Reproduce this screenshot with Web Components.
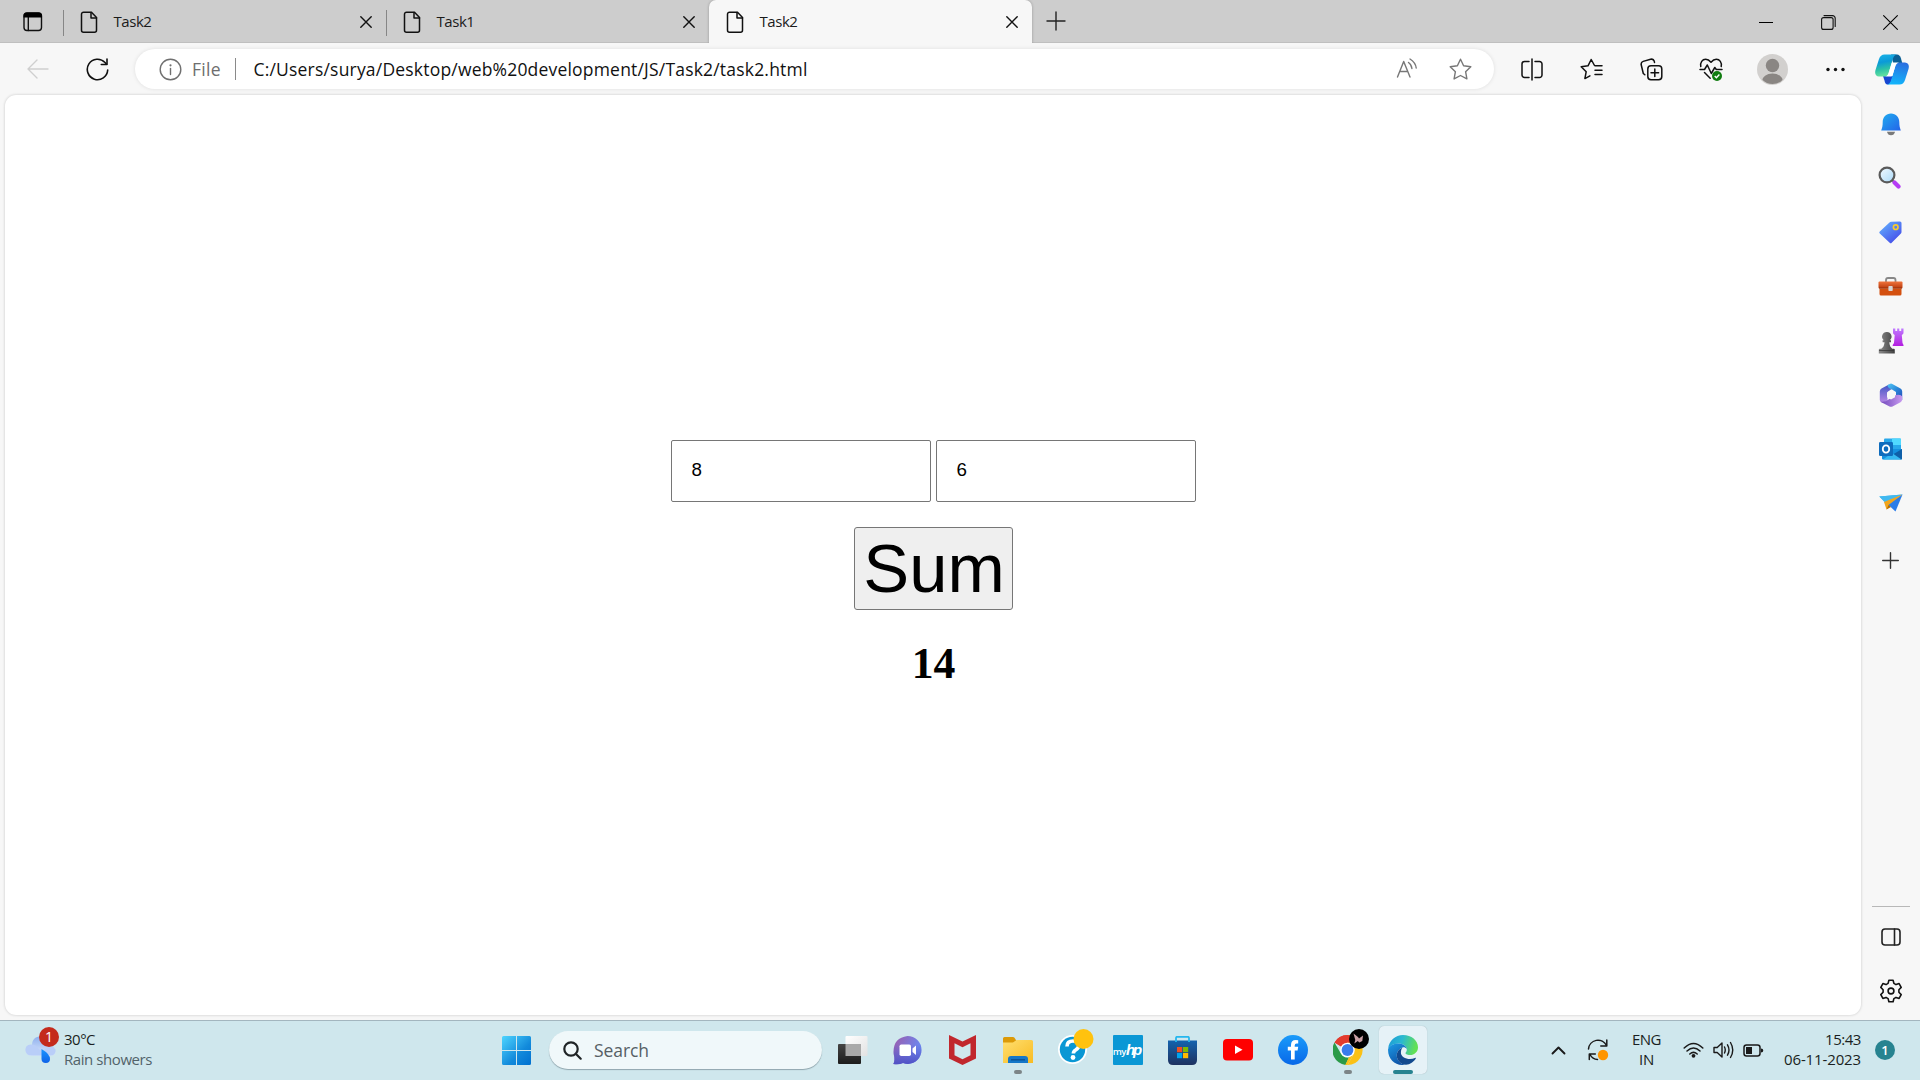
<!DOCTYPE html>
<html lang="en">
<head>
<meta charset="utf-8">
<title>Task2</title>
<style>
html,body{margin:0;padding:0;width:1920px;height:1080px;overflow:hidden;background:#f7f7f7}
body{font-family:"Open Sans","Noto Sans",sans-serif;color:#1b1b1b}
</style>
</head>
<body>
<desktop-screen></desktop-screen>
<script>
const DOC = '<path d="M3.5 1.2h8l5 5.2v12.800a2 2 0 0 1-2 2H3.500a2 2 0 0 1-2-2V3.200a2 2 0 0 1 2-2z"/><path d="M11 1.500v5.500h5.500"/>';
const line = (c, w, body) => `<g fill="none" stroke="${c}" stroke-width="${w}" stroke-linecap="round" stroke-linejoin="round">${body}</g>`;
/* name: [width, height, markup] in CSS pixels */
const ICONS = {
  tabs: [20, 20, line('#111', 1.4, '<rect x="1" y="1" width="17.500" height="17.500" rx="3"/><path d="M5.300 5v13.500"/>') + '<path d="M.5 5.500V4a3.500 3.500 0 0 1 3.500-3.500h11.500A3.500 3.500 0 0 1 19 4v1.500z" fill="#000"/>'],
  doc: [18, 23, line('#111', 1.5, DOC)],
  x: [12, 12, line('#111', 1.4, '<path d="M.8.8l10.400 10.400M11.200.8L.8 11.200"/>')],
  plus: [20, 20, line('#222', 1.4, '<path d="M10 1v18M1 10h18"/>')],
  plusS: [17, 17, line('#333', 1.4, '<path d="M8.500.7v15.600M.7 8.500h15.600"/>')],
  min: [15, 15, '<path d="M0 7h14v1H0z" fill="#000"/>'],
  max: [15, 15, line('#111', 1.1, '<rect x=".6" y="2.600" width="11.500" height="11.800" rx="2"/><path d="M3 .6h8.500a2.700 2.700 0 0 1 2.700 2.700v8.200"/>')],
  xwin: [15, 15, line('#000', 1.1, '<path d="M.6.6l13.800 13.800M14.400.6L.6 14.400"/>')],
  back: [22, 20, line('#cfcfcf', 1.4, '<path d="M21 10H1M10 1L1 10l9 9"/>')],
  reload: [23, 23, line('#111', 1.6, '<path d="M21.700 12A10.200 10.200 0 1 1 19 4.500l1.500 1.700"/><path d="M21 1v5.500h-5.700"/>')],
  info: [23, 23, line('#707070', 1.4, '<circle cx="11.500" cy="11.500" r="10.300"/><path d="M11.500 10.500v6"/>') + '<circle cx="11.500" cy="7.300" r="1.100" fill="#707070"/>'],
  read: [22, 20, line('#777', 1.4, '<path d="M1.500 19L7.700 3.500 14 19M3.700 13.500h8"/><path d="M12.500 4.500q3 2 3.400 6M14 1q5.600 3.500 6.200 9"/>')],
  star: [23, 22, line('#777', 1.4, '<path d="M11.500 1.200l3.100 6.500 7.200 1-5.200 5 1.300 7.200-6.400-3.400-6.400 3.400 1.300-7.200-5.200-5 7.200-1z"/>')],
  split: [22, 23, line('#111', 1.5, '<path d="M8 3.500H3.500A2.500 2.500 0 0 0 1 6v11a2.500 2.500 0 0 0 2.500 2.500H8M14 3.500h4.500A2.500 2.500 0 0 1 21 6v11a2.500 2.500 0 0 1-2.500 2.500H14M11 1v21"/>')],
  favs: [23, 22, line('#111', 1.5, '<path d="M14.500 7.500L11.200 1.500 8 7.800l-6.800 1 5 4.900-1.300 6.900 5-2.800M15 7.800h7M15 12.200h7M15 16.600h7"/>')],
  coll: [23, 23, line('#111', 1.5, '<rect x="7.800" y="7.800" width="14" height="14" rx="3.200"/><path d="M14.800 11v7.600M11 14.800h7.600M4.800 16.800L3.300 15.500 1.200 6.800a3 3 0 0 1 2-3.400l7.400-2.100a3 3 0 0 1 3.700 2L14.500 4.500"/>')],
  heart: [24, 23, line('#111', 1.5, '<path d="M1.800 8.500C1 4.500 3.300 1.300 6.700 1.300c2.400 0 3.800 1.200 5.300 3 1.500-1.800 2.900-3 5.300-3 3.400 0 5.700 3.200 4.900 7.200M1 11.500h4.500L8.300 7l4 8.500 3.500-6 1.500 2H23M5.500 14.500l5.700 5.700"/>') + '<circle cx="18" cy="18" r="5" fill="#107c10"/><path d="M15.700 18l1.700 1.700 3-3.200" stroke="#fff" stroke-width="1.400" fill="none"/>'],
  avatar: [31, 31, '<defs><clipPath id="a"><circle cx="15.500" cy="15.500" r="14.500"/></clipPath></defs><circle cx="15.500" cy="15.500" r="15.500" fill="#d2d0ce"/><circle cx="15.500" cy="11.500" r="6.700" fill="#8a8683"/><ellipse cx="15.500" cy="27" rx="10.500" ry="7.500" fill="#8a8683" clip-path="url(#a)"/>'],
  dots: [19, 5, '<g fill="#111"><circle cx="2" cy="2.500" r="1.700"/><circle cx="9.500" cy="2.500" r="1.700"/><circle cx="17" cy="2.500" r="1.700"/></g>'],
  copilot: [34, 31, '<defs><linearGradient id="a" x2=".2" y2="1"><stop stop-color="#1bb4e8"/><stop offset=".4" stop-color="#0b9ad8"/><stop offset=".7" stop-color="#2bc0a8"/><stop offset="1" stop-color="#62e0a0"/></linearGradient><linearGradient id="b" x1=".6" x2=".4" y2="1"><stop stop-color="#2a6fe0"/><stop offset="1" stop-color="#12b5fb"/></linearGradient></defs><path d="M8 22h10l-2 6q-1 3-4 2.500-2-.5-2.500-4z" fill="#1747d1"/><path d="M16 .5h6q3 .3 4 4l1.200 4.500h-9z" fill="#0b5f94"/><path d="M9.500.5H22q-3 .5-4 4l-4.500 15q-1 3-4 3H4q-5-.5-3.500-6.500L4 5Q5.500.5 9.500.5z" fill="url(#a)"/><path d="M24.500 8.500H30q5 .5 3.500 6.500L30 26q-1.500 4.500-5.500 4.500H12q3-.500 4-4l4.500-15q1-3 4-3z" fill="url(#b)"/><path d="M18 8.500h6q-2.500.3-3.500 3L17.500 21.500q-.3 1-1.500 1H9.500q3 0 4-3l3-10q.3-1 1.500-1z" fill="#fff"/>'],
  bell: [20, 23, '<defs><linearGradient id="a" x2="1" y2="1"><stop stop-color="#20aef0"/><stop offset="1" stop-color="#2463e8"/></linearGradient></defs><path d="M10 .5c5 0 8.300 3.800 8.300 8.500 0 4 .5 5.500 1.500 8.500H.2C1.200 14.500 1.700 13 1.700 9 1.700 4.300 5 .5 10 .5z" fill="url(#a)"/><path d="M6 18.700h8q-.8 3.500-4 3.500T6 18.700z" fill="#7a7a7a"/>'],
  search3: [23, 23, '<defs><linearGradient id="a" x2="1" y2="1"><stop stop-color="#f4faff"/><stop offset="1" stop-color="#a9d9f8"/></linearGradient></defs><path d="M13 13l3 3" stroke="#777" stroke-width="2"/><path d="M16.500 16.500l4 4" stroke="#b63cf5" stroke-width="4.200" stroke-linecap="round"/><circle cx="9" cy="9" r="7.400" fill="url(#a)" stroke="#5a5a5a" stroke-width="2.200"/>'],
  tag: [23, 23, '<defs><linearGradient id="a" x2=".8" y2="1"><stop stop-color="#65b8ff"/><stop offset="1" stop-color="#4448e8"/></linearGradient></defs><path d="M12 .8l9-.3q1.500 0 1.500 1.500V11q0 1-.8 1.800l-9 9q-1 1-2 0L.8 12.500q-1-1 0-2L10.500 1.400q.7-.6 1.500-.6z" fill="url(#a)"/><circle cx="16.700" cy="6.200" r="2.300" fill="none" stroke="#f7cb2d" stroke-width="1.700"/>'],
  toolbox: [25, 19, '<defs><linearGradient id="a" x2="0" y2="1"><stop stop-color="#f0743c"/><stop offset="1" stop-color="#b8380c"/></linearGradient></defs><path d="M8 5V3q0-2 2-2h5.500q2 0 2 2v2" fill="none" stroke="#888" stroke-width="1.800"/><rect x=".5" y="4.500" width="24" height="7" rx="1" fill="url(#a)"/><path d="M1.500 11.500h22V17q0 1.500-1.500 1.500H3q-1.500 0-1.500-1.500z" fill="#d4500f"/><path d="M1 11h23" stroke="#8f2d0a" stroke-width=".8"/><rect x="10.400" y="9" width="4.300" height="5" rx=".8" fill="#d4d4d4"/>'],
  chess: [26, 26, '<defs><linearGradient id="a" x2="0" y2="1"><stop stop-color="#c07bff"/><stop offset="1" stop-color="#b31ee0"/></linearGradient><linearGradient id="b" x2="1"><stop stop-color="#8a8a8a"/><stop offset="1" stop-color="#404040"/></linearGradient></defs><path d="M15 .5h2.300V3h1.900V.5h2.100V3h1.900V.5H25.500V5q0 1-1.700 2l.7 8 1 2v1H14.700v-1l1.300-2L16.700 7Q15 6 15 5z" fill="url(#a)"/><path d="M8.800 4a4.600 4.600 0 0 1 3 8.200h1.200v2h-1.700q.2 4.500 3 6.500h1.500q1 0 1 1v3.800H.8v-3.800q0-1 1-1h1.500q3-2 3.200-6.500H4.600v-2h1.200A4.600 4.600 0 0 1 8.800 4z" fill="url(#b)"/><path d="M1 22.500h15" stroke="#333" stroke-width=".7"/>'],
  m365: [24, 24, '<defs><linearGradient id="a" x2="1" y2="1"><stop stop-color="#54c8f5"/><stop offset=".5" stop-color="#2a86d8"/><stop offset="1" stop-color="#2348b8"/></linearGradient><linearGradient id="b" x2="1"><stop stop-color="#7148bb"/><stop offset="1" stop-color="#c79af0"/></linearGradient><linearGradient id="c" x2="0" y2="1"><stop stop-color="#3f56c4"/><stop offset="1" stop-color="#b686e4"/></linearGradient></defs><path d="M10 1.500L2.500 5.500Q.8 6.500.8 8.500V17q0 1.500 1.500 2.300 3.500 1 6.200-2.300V9L14 5z" fill="url(#c)"/><path d="M8.500 2.200L10.700.9q1.300-.8 2.600 0l8.200 4.600q1.700 1 1.700 3V17q-2-3-6.200-4V9l-4-2.500Q8.500 5 8.500 2.200z" fill="url(#a)"/><path d="M23.200 13.500v3q0 1.700-1.700 2.700L13.500 23.400q-1.500.7-3 0L1.500 18.700q4.500.8 8-2.200L17 12q5-1 6.200 1.500z" fill="url(#b)"/><path d="M12 7.300l4 2.300v4.600l-4 2.300-4-2.300V9.600z" fill="#f7f7f7"/>'],
  outlook: [23, 22, '<rect x="5" y=".5" width="17" height="12" rx="1" fill="#28a8ea"/><path d="M13 .5h8a1 1 0 0 1 1 1V7h-9z" fill="#50d9ff"/><path d="M3 11h20v9.500q0 1-1 1H4q-1 0-1-1z" fill="#1490df"/><path d="M23 11l-10 6 9 4.500q1 0 1-1z" fill="#0f5fa8"/><path d="M4 21.500L13 15l9.500 6.500z" fill="#35b8f1"/><rect x="0" y="4" width="14" height="14" rx="1.300" fill="#0f6cbd"/><ellipse cx="7" cy="11" rx="3.200" ry="3.600" fill="none" stroke="#fff" stroke-width="1.900"/>'],
  plane: [24, 18, '<path d="M.3 2.500L23.500.5l-17 8z" fill="#35b0ee"/><path d="M.3 2.500L6.500 9 23.500.5z" fill="#41b9f0"/><path d="M5 8L23.500.5 7.500 15.500z" fill="#f2a51c"/><path d="M9.500 11L23.500.5 16.500 17.500z" fill="#2b7de9"/><path d="M7.500 15.500l2-4.500 2.500 2z" fill="#b76e00"/>'],
  panel: [20, 18, line('#222', 1.6, '<rect x="1" y="1" width="18" height="16" rx="3"/><path d="M13.500 1v16"/>')],
  gear: [24, 24, line('#111', 1.6, '<circle cx="12" cy="12" r="2.900"/><path d="M9.900 1.200h4.200l.8 3.200 2.100 1.200 3.100-1 2.100 3.800-2.300 2.300v2.600l2.300 2.300-2.100 3.800-3.100-1-2.100 1.200-.8 3.200H9.900l-.8-3.200L7 18.400l-3.100 1-2.100-3.800 2.300-2.300v-2.600L1.800 8.400l2.100-3.800 3.100 1 2.100-1.200z"/>')],
  rain: [32, 36, '<defs><linearGradient id="a" x2="0" y2="1"><stop stop-color="#8fb0ee"/><stop offset="1" stop-color="#dbe8fc"/></linearGradient><linearGradient id="b" x2="0" y2="1"><stop stop-color="#1a96ff"/><stop offset="1" stop-color="#0f62e8"/></linearGradient></defs><path d="M7 14C7 8 11 5.500 15.500 5.500S24 9 24.500 14q6 1 6 6.500 0 4-5 4H7q-6.500 0-6.500-5.500T7 14z" fill="url(#a)"/><path d="M.5 19q0-5 5-5.500 5-.5 7.500 4 4 3 8 0 5-3.500 9.500 1 .5 6-5 6H7Q.5 24.500.5 19z" fill="#b9cef8"/><path d="M16.500 18q8.500 5 8.500 10 0 4-4.200 4T16.500 28z" fill="url(#b)"/>'],
  win: [29, 29, '<defs><linearGradient id="a" gradientUnits="userSpaceOnUse" x2="29" y2="29"><stop stop-color="#4fd5ff"/><stop offset=".6" stop-color="#128adb"/><stop offset="1" stop-color="#0070d0"/></linearGradient></defs><path d="M1.500 0H14v14H0V1.500Q0 0 1.500 0zM15 0h12.500Q29 0 29 1.500V14H15zM0 15h14v14H1.500Q0 29 0 27.500zM15 15h14v12.500q0 1.500-1.500 1.500H15z" fill="url(#a)"/>'],
  find: [19, 19, line('#1f2426', 2.2, '<circle cx="8" cy="8" r="6.700"/><path d="M13 13l4.700 4.700"/>')],
  taskview: [30, 28, '<defs><linearGradient id="a" x2="0" y2="1"><stop stop-color="#444"/><stop offset="1" stop-color="#1c1c1c"/></linearGradient><linearGradient id="b" x2="1" y2="1"><stop stop-color="#fff"/><stop offset="1" stop-color="#e2e2e2"/></linearGradient></defs><rect x="7.500" width="22" height="20" rx="1" fill="url(#b)"/><rect y="8" width="23" height="20" rx="1" fill="url(#a)"/><path d="M7.500 8H23v12H7.500z" fill="#a9a9a9"/>'],
  chat: [29, 29, '<defs><linearGradient id="a" x1=".1" x2=".9" y2=".4"><stop stop-color="#9a5fb0"/><stop offset="1" stop-color="#6d86ee"/></linearGradient><linearGradient id="b" x2="0" y2="1"><stop offset=".3" stop-color="#5558c8" stop-opacity="0"/><stop offset="1" stop-color="#5050c4"/></linearGradient></defs><path d="M14.500 0A14 14 0 0 1 28.500 14c0 9-8.500 16.500-18.500 13Q6 29 .3 28q2-3 .4-10Q-.7 2 14.500 0z" fill="url(#a)"/><path d="M14.500 0A14 14 0 0 1 28.500 14c0 9-8.500 16.500-18.500 13Q6 29 .3 28q2-3 .4-10Q-.7 2 14.500 0z" fill="url(#b)"/><rect x="6.500" y="8.500" width="11.500" height="11.500" rx="1.800" fill="#fff"/><path d="M19.500 12.500l3.500-3v9.500l-3.500-3z" fill="#fff"/>'],
  mcafee: [27, 30, '<path d="M0 0l13.500 6.500L27 0v23.500L13.500 30 0 23.500zM5.500 8.200v12l8 4 8-4v-12l-8 4z" fill="#c1272d" fill-rule="evenodd"/>'],
  folder: [30, 26, '<defs><linearGradient id="a" x2="1" y2="1"><stop stop-color="#ffdf70"/><stop offset="1" stop-color="#f8bb22"/></linearGradient></defs><path d="M0 1.500Q0 0 1.500 0H10q1.500 0 2 1.500L13.500 4 9 7H0z" fill="#dc9a08"/><path d="M0 5.500h10L13.500 3H28.500Q30 3 30 4.500V26H0z" fill="url(#a)"/><path d="M5 26v-4q0-3 3-3h14q3 0 3 3v4z" fill="#1577c8"/><path d="M8 22.800h14" stroke="#0b4f8f" stroke-width="1.300"/>'],
  help: [36, 36, '<circle cx="14.500" cy="20.500" r="14.500" fill="#fff"/><circle cx="14.500" cy="20.500" r="12.700" fill="#0a97d4"/><path d="M9 17.500q0-5.500 6-5.500 5.800 0 5.800 4.500 0 2.500-3.200 4.500-2.200 1.300-2.200 3.500" fill="none" stroke="#fff" stroke-width="3.600"/><circle cx="15" cy="28.500" r="2.400" fill="#fff"/><circle cx="25.500" cy="10" r="10" fill="#ffc20e"/>'],
  store: [29, 29, '<defs><linearGradient id="a" x2="0" y2="1"><stop stop-color="#1463ae"/><stop offset="1" stop-color="#1e3260"/></linearGradient></defs><path d="M0 4.500h29V24q0 5-5 5H5q-5 0-5-5z" fill="url(#a)"/><path d="M8 6V2q0-1.200 1.200-1.200h10.600Q21 .8 21 2v4" fill="none" stroke="#25b7ee" stroke-width="1.800"/><path d="M9 11h5.200v5.200H9z" fill="#f25022"/><path d="M15 11h5.200v5.200H15z" fill="#7fba00"/><path d="M9 17h5.200v5.200H9z" fill="#00a4ef"/><path d="M15 17h5.200v5.200H15z" fill="#ffb900"/>'],
  youtube: [30, 22, '<rect width="30" height="21.500" rx="4" fill="#f00"/><path d="M12 6.500l7.500 4.300L12 15z" fill="#fff"/>'],
  facebook: [30, 30, '<defs><linearGradient id="a" x2="0" y2="1"><stop stop-color="#1a9bfa"/><stop offset="1" stop-color="#0868e8"/></linearGradient></defs><circle cx="15" cy="15" r="15" fill="url(#a)"/><path d="M13 24.500v-9H9.800v-3.800H13V10q0-5 4.700-5 1.300 0 2.500.2v3.300h-1.600q-1.900 0-1.900 1.900v1.300h3.500l-.6 3.800h-2.900v9z" fill="#fff"/>'],
  chrome: [36, 36, '<path d="M14.500 21L1.500 13.500A15 15 0 0 1 27.500 13.500H14.500z" fill="#e33b2e"/><path d="M14.500 6a15 15 0 0 1 13 7.500A15 15 0 0 1 14.500 36l6.500-11.300V13.500H14.500z" fill="#fbc116"/><path d="M1.500 13.500l6.500 11.200q3 4.500 8 3.800L12.500 36A15 15 0 0 1 1.500 13.500z" fill="#2a9a48"/><path d="M21 24.700L14.500 36h-2.200l3.700-8z" fill="#fbc116"/><path d="M1.500 13.500A15 15 0 0 1 27.500 13.500H14.500A7.500 7.500 0 0 0 8 17.500z" fill="#e33b2e"/><circle cx="14.500" cy="21" r="7.300" fill="#fff"/><circle cx="14.500" cy="21" r="5.900" fill="#3a7cec"/><circle cx="26" cy="10" r="10" fill="#000"/><path d="M20.500 4.500l4.500 3.500 1 1.500 4-3-.7 5.500-3 1.500-1.500-1.500-3.500 2.500q.5-2 1-3.500z" fill="#caa0a6"/>'],
  edge: [30, 30, '<defs><linearGradient id="a" x2="1" y2=".2"><stop stop-color="#1b9ad8"/><stop offset=".5" stop-color="#2bb9d0"/><stop offset="1" stop-color="#62e055"/></linearGradient><linearGradient id="b" x2=".5" y2="1"><stop stop-color="#1c9be6"/><stop offset="1" stop-color="#0f54a8"/></linearGradient></defs><path d="M.2 13.500C1 5.500 7.500 0 15 0c8.500 0 15 5.500 15 12.200 0 4.600-3.500 7.800-8 7.800-3.500 0-4.500-1.200-4.500-2 0-.7 1.300-1.300 1.300-3.300C18.800 11 15 8.500 10.500 8.500 5 8.500 1.500 11.500.2 13.500z" fill="url(#a)"/><path d="M.1 14C2 10 6 8.500 10.500 8.500c4.500 0 8 2.500 8.300 5.700-1-1.700-2.800-2.200-4.300-1.700C11 14 8.500 17 8.800 21c.3 4 3.500 8 8.200 8.800Q15 30 14 30C6 29.500-.5 23 .1 14z" fill="url(#b)"/><path d="M14.500 12.500C11 14 8.500 17 8.800 21c.3 4.500 4 8.700 9.200 8.700 4 0 8-3 9.800-6.200.3-.7-.3-1-.9-.6-5 2.500-14.500.5-14-6 .1-2 1-3.500 1.600-4.400z" fill="#134a8e"/>'],
  up: [15, 10, line('#1a1a1a', 1.9, '<path d="M1.500 8.500l6-6 6 6"/>')],
  update: [22, 22, line('#1a1a1a', 1.5, '<path d="M1.500 10A9.500 9.500 0 0 1 19.500 6.500M19.800 1v6h-6M2.300 20.500v-5.500h6M3 15.500q2.500 4.700 7.500 5"/>') + '<circle cx="16" cy="16" r="5.200" fill="#ff9500"/>'],
  wifi: [21, 16, line('#1a1a1a', 1.5, '<path d="M1.200 6q9.300-9 18.600 0M4 9q6.500-6 13 0M6.800 12q3.700-3.300 7.400 0"/>') + '<circle cx="10.500" cy="13.800" r="1.900" fill="#1a1a1a"/>'],
  sound: [21, 18, line('#1a1a1a', 1.4, '<path d="M1 6.500v5h3.200L9 16V2L4.200 6.500zM11.500 6q1.500 3 0 6M14.500 3.800q3 5.200 0 10.400M17.500 1.500q4.500 7.500 0 15"/>')],
  battery: [21, 13, line('#1a1a1a', 1.5, '<rect x="1" y="1" width="16" height="11" rx="2.500"/>') + '<path d="M3 3h6v7H3zM18 4.500q2.300 0 2.300 2t-2.300 2z" fill="#1a1a1a"/>'],
};

class UiIcon extends HTMLElement {
  connectedCallback() {
    const [w, h, body] = ICONS[this.getAttribute('name')];
    this.attachShadow({mode: 'open'}).innerHTML = `<style>:host{display:block;flex:none;width:${w}px;height:${h}px}svg{display:block}</style><svg width="${w}" height="${h}" viewBox="0 0 ${w} ${h}" aria-hidden="true">${body}</svg>`;
  }
}
customElements.define('ui-icon', UiIcon);

/* One line of text tracked to an exact advance width. */
class UiLabel extends HTMLElement {
  connectedCallback() {
    this.attachShadow({mode: 'open'}).innerHTML = '<style>:host{display:block;flex:none;white-space:pre}span{display:inline-block}</style><span><slot></slot></span>';
    const want = +this.getAttribute('w');
    const span = this.shadowRoot.querySelector('span');
    const have = span.getBoundingClientRect().width;
    if (want && have) span.style.letterSpacing = (want - have) / this.textContent.length + 'px';
  }
}
customElements.define('ui-label', UiLabel);

const define = (name, html) => customElements.define(name, class extends HTMLElement {
  connectedCallback() { this.attachShadow({mode: 'open'}).innerHTML = html; }
});

define('browser-tab', `<style>
:host{display:flex;flex:none;width:323px;height:43px;align-items:center;box-sizing:border-box;font-size:15px;color:#1b1b1b}
i{width:1px;height:26px;background:#868686;flex:none;margin-top:2px}
ui-icon[name=doc]{margin:1px 0 0 16px}
.t{margin:-2px 0 0 15.500px;flex:1}
ui-icon[name=x]{margin:1px 14px 0 0}
:host([active]){background:#f7f7f7;border-radius:7px 7px 0 0;box-shadow:0 0 3px #0004;clip-path:inset(0 -4px 0 -4px)}
:host([active]) i{background:transparent}
</style><i></i><ui-icon name="doc"></ui-icon><div class="t"><slot></slot></div><ui-icon name="x"></ui-icon>`);

define('tab-strip', `<style>
:host{display:flex;height:43px;background:#cdcdcd;align-items:center;flex:none;box-shadow:inset 0 -1px #bfbfbf}
.a{margin:1px 20px 0 23px}.p{margin:-1px 0 0 14px}
.w{display:flex;gap:47px;margin:1px 22px 0 auto}
</style><ui-icon class="a" name="tabs"></ui-icon>
<browser-tab><ui-label w="38">Task2</ui-label></browser-tab>
<browser-tab><ui-label w="38">Task1</ui-label></browser-tab>
<browser-tab active><ui-label w="38">Task2</ui-label></browser-tab>
<ui-icon class="p" name="plus"></ui-icon>
<div class="w"><ui-icon name="min"></ui-icon><ui-icon name="max"></ui-icon><ui-icon name="xwin"></ui-icon></div>`);

define('address-bar', `<style>
:host{display:flex;flex:none;width:1359px;height:40px;border-radius:20px;background:#fff;box-shadow:0 0 4px #0000001a;align-items:center;font-size:17.5px;box-sizing:border-box;padding:0 22px 0 24px}
.f{margin-left:10px;color:#6e6e6e}.s{width:1px;height:22px;background:#8a8a8a;margin:0 17.500px 0 14px}.u{color:#111}
.r{margin:-2px 31px 0 auto}
</style><ui-icon name="info"></ui-icon><ui-label class="f" w="29">File</ui-label><div class="s"></div>
<ui-label class="u" w="554">C:/Users/surya/Desktop/web%20development/JS/Task2/task2.html</ui-label>
<ui-icon class="r" name="read"></ui-icon><ui-icon name="star"></ui-icon>`);

define('tool-bar', `<style>
:host{display:flex;height:52px;flex:none;align-items:center;background:#f7f7f7}
.b{margin-left:27px}.l{margin:0 26px 0 37px}
.c{display:flex;flex:none;align-items:center;justify-content:center;height:52px}
</style><ui-icon class="b" name="back"></ui-icon><ui-icon class="l" name="reload"></ui-icon><address-bar></address-bar>
<div class="c" style="width:75px"><ui-icon name="split"></ui-icon></div>
<div class="c" style="width:45px"><ui-icon name="favs"></ui-icon></div>
<div class="c" style="width:75px"><ui-icon name="coll"></ui-icon></div>
<div class="c" style="width:44px"><ui-icon name="heart"></ui-icon></div>
<div class="c" style="width:79px"><ui-icon name="avatar"></ui-icon></div>
<div class="c" style="width:46px"><ui-icon name="dots"></ui-icon></div>
<div class="c" style="width:67px"><ui-icon name="copilot"></ui-icon></div>`);

define('side-bar', `<style>
:host{display:flex;flex-direction:column;width:59px;flex:none;align-items:center;box-sizing:border-box;padding:3px 0 2px}
div{height:54px;width:59px;display:flex;flex:none;align-items:center;justify-content:center}
ui-icon{margin-top:-1px}
ui-icon[name=search3]{margin:-3px 0 0 -2px}
.p{height:62px}hr{border:0;margin:auto 0 3px;height:1px;width:38px;background:#b8b8b8}
</style>` + ['bell','search3','tag','toolbox','chess','m365','outlook','plane'].map(n => `<div><ui-icon name="${n}"></ui-icon></div>`).join('') +
`<div class="p"><ui-icon name="plusS"></ui-icon></div><hr><div><ui-icon name="panel"></ui-icon></div><div><ui-icon name="gear"></ui-icon></div>`);

define('number-field', `<style>
:host{display:flex;box-sizing:border-box;width:260px;height:62px;border:1px solid #767676;border-radius:2px;background:#fff;padding:0 19px 2px 19.500px;align-items:center;font:18.75px "Liberation Sans",sans-serif;color:#000}
</style><span><slot></slot></span>`);

define('sum-page', `<style>
:host{display:flex;flex-direction:column;align-items:center;width:1856px;height:920px;box-sizing:border-box;margin:0 0 5px 5px;flex:none;background:#fff;border-radius:11px;box-shadow:0 0 3px #0003;padding:345px 0 0 1px}
.row{display:flex;gap:5px}
button{margin:25px 0 0;width:159px;height:83px;padding:0 0 0 1px;border:1px solid #767676;border-radius:3px;background:#efefef;color:#000;font:68.750px/79px "Liberation Sans",sans-serif}
h1{margin:28px 0 0;font:bold 43.750px/50px "Liberation Serif",serif;color:#000}
</style><div class="row"><number-field>8</number-field><number-field>6</number-field></div><button>Sum</button><h1>14</h1>`);

define('task-app', `<style>
:host{display:flex;flex:none;width:55px;height:60px;align-items:center;justify-content:center;position:relative}
.tile{display:flex;width:48px;height:48px;align-items:center;justify-content:center;border-radius:5px}
:host([current]) .tile{background:#e6f2f7;box-shadow:0 0 1px #0004}
.dot{position:absolute;left:24px;top:50px;width:8px;height:4px;border-radius:2px;background:#7c8587;display:none}
:host([running]) .dot{display:block}
:host([current]) .dot{display:block;width:20px;left:18px;background:#278390}
</style><div class="tile"><slot></slot></div><div class="dot"></div>`);

define('task-bar', `<style>
:host{display:flex;height:60px;flex:none;background:#cfe7ed;box-shadow:inset 0 1px #a3b6bf;align-items:center;font-size:15px;color:#1a1f22;line-height:20px}
.wx{display:flex;width:502px;flex:none;align-items:center}
.wx ui-label,.lang ui-label,.clk ui-label{margin-top:-1px;margin-bottom:1px}
.pic{position:relative;margin:-3px 7px 0 25px}
.n{position:absolute;left:14px;top:-4px;width:20px;height:20px;border-radius:50%;background:#c42b1c;color:#fff;text-align:center;font-size:14px}
.d{color:#52636a}
.q{display:flex;align-items:center;box-sizing:border-box;width:273px;height:38px;border-radius:20px;background:#f0f8fa;box-shadow:0 1px 1px #8fa5ad;margin:0 3px 0 18px;padding-left:14px;font-size:17.5px;color:#566065;flex:none}
.q ui-label{margin:-1px 0 0 12px}
.hp{width:30px;height:30px;background:#0a97d5;border-radius:1px;color:#fff;font:600 9.500px/29px "Open Sans",sans-serif;text-align:center;white-space:nowrap;letter-spacing:-.5px}
.hp b{font:italic 700 15px/29px "Liberation Sans Narrow","Liberation Sans",sans-serif;letter-spacing:-2px;padding-right:2px}
.up{margin:0 21px 0 121px}
.lang{display:flex;flex-direction:column;align-items:center;margin:0 22px 0 23px;width:29px}
.s{margin-left:9px}
.clk{display:flex;flex-direction:column;align-items:flex-end;margin-left:19px;width:78px}
.c{width:20px;height:20px;border-radius:50%;background:#278390;color:#fff;text-align:center;margin-left:14px;font-size:13px;font-weight:600}
</style>
<div class="wx"><div class="pic"><ui-icon name="rain"></ui-icon><div class="n">1</div></div><div><ui-label w="31">30°C</ui-label><ui-label class="d" w="88">Rain showers</ui-label></div></div>
<ui-icon name="win"></ui-icon>
<div class="q"><ui-icon name="find"></ui-icon><ui-label w="55">Search</ui-label></div>
<task-app><ui-icon name="taskview" style="margin-left:1px"></ui-icon></task-app>
<task-app><ui-icon name="chat"></ui-icon></task-app>
<task-app><ui-icon name="mcafee"></ui-icon></task-app>
<task-app running><ui-icon name="folder"></ui-icon></task-app>
<task-app><ui-icon name="help" style="margin:-6px 0 0 6px"></ui-icon></task-app>
<task-app><div class="hp">my<b>hp</b></div></task-app>
<task-app><ui-icon name="store"></ui-icon></task-app>
<task-app><ui-icon name="youtube"></ui-icon></task-app>
<task-app><ui-icon name="facebook"></ui-icon></task-app>
<task-app running><ui-icon name="chrome" style="margin:-6px 0 0 6px"></ui-icon></task-app>
<task-app current><ui-icon name="edge"></ui-icon></task-app>
<ui-icon class="up" name="up"></ui-icon><ui-icon name="update"></ui-icon>
<div class="lang"><ui-label w="29">ENG</ui-label><ui-label w="15">IN</ui-label></div>
<ui-icon name="wifi"></ui-icon><ui-icon class="s" name="sound"></ui-icon><ui-icon class="s" name="battery"></ui-icon>
<div class="clk"><ui-label w="36">15:43</ui-label><ui-label w="77">06-11-2023</ui-label></div><div class="c">1</div>`);

define('desktop-screen', `<style>
:host{display:flex;flex-direction:column;width:1920px;height:1080px;background:#f7f7f7}
main{display:flex;flex:1}
</style><tab-strip></tab-strip><tool-bar></tool-bar><main><sum-page></sum-page><side-bar></side-bar></main><task-bar></task-bar>`);
</script>
</body>
</html>
